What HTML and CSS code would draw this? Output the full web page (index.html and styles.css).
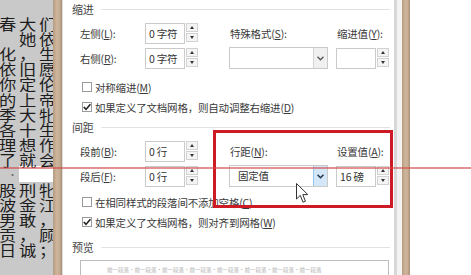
FILE: index.html
```html
<!DOCTYPE html>
<html lang="zh-CN">
<head>
<meta charset="utf-8">
<title>段落</title>
<link rel="stylesheet" href="styles.css">
</head>
<body>
<div class="doc">
  <div class="ln"><span>春</span><span>大</span><span>们</span></div>
  <div class="ln"><span></span><span>她</span><span>依</span></div>
  <div class="ln"><span>化</span><span>，</span><span>生</span></div>
  <div class="ln"><span>依</span><span>旧</span><span>愿</span></div>
  <div class="ln"><span>你</span><span>定</span><span>伦</span></div>
  <div class="ln"><span>的</span><span>上</span><span>帝</span></div>
  <div class="ln"><span>季</span><span>大</span><span>牝</span></div>
  <div class="ln"><span>各</span><span>十</span><span>生</span></div>
  <div class="ln"><span>理</span><span>想</span><span>作</span></div>
  <div class="ln"><span>了</span><span>就</span><span>会</span></div>
  <div class="ln gapline"><span class="dot">·</span><span class="blank"></span></div>
  <div class="ln"><span>股</span><span>刑</span><span>牝</span></div>
  <div class="ln"><span>波</span><span>金</span><span>江</span></div>
  <div class="ln"><span>男</span><span>敢</span><span>，</span></div>
  <div class="ln"><span>贡</span><span>，</span><span>顾</span></div>
  <div class="ln"><span>日</span><span>诚</span><span>；</span></div>
</div>
<div class="bar"></div>
<div class="dialog">
  <div class="sec-head"><span>缩进</span></div>
  <div class="fields f1">
    <div class="lbl c1 r1">左侧(<u>L</u>):</div>
    <div class="spin c2 r1"><div class="inp">0 字符</div><div class="arrows"><span class="up"></span><span class="dn"></span></div></div>
    <div class="lbl c4 r1">特殊格式(<u>S</u>):</div>
    <div class="lbl c6 r1">缩进值(<u>Y</u>):</div>
    <div class="lbl c1 r2">右侧(<u>R</u>):</div>
    <div class="spin c2 r2"><div class="inp">0 字符</div><div class="arrows"><span class="up"></span><span class="dn"></span></div></div>
    <div class="sel c4 r2"><div class="val"></div><div class="btn"><svg width="7" height="5" viewBox="0 0 7 5"><path d="M0.5 0.8 L3.5 3.8 L6.5 0.8" fill="none" stroke="#555" stroke-width="1.3"/></svg></div></div>
    <div class="spin c6 r2"><div class="inp"></div><div class="arrows"><span class="up"></span><span class="dn"></span></div></div>
  </div>
  <div class="check first"><span class="box"></span><span>对称缩进(<u>M</u>)</span></div>
  <div class="check"><span class="box on"><svg width="10" height="10" viewBox="0 0 10 10"><path d="M1.8 5 L4 7.4 L8.4 2.2" fill="none" stroke="#222" stroke-width="1.6"/></svg></span><span>如果定义了文档网格，则自动调整右缩进(<u>D</u>)</span></div>
  <div class="sec-head"><span>间距</span></div>
  <div class="fields f2">
    <div class="lbl c1 r1">段前(<u>B</u>):</div>
    <div class="spin c2 r1"><div class="inp">0 行</div><div class="arrows"><span class="up"></span><span class="dn"></span></div></div>
    <div class="lbl c4 r1">行距(<u>N</u>):</div>
    <div class="lbl c6 r1">设置值(<u>A</u>):</div>
    <div class="lbl c1 r2">段后(<u>F</u>):</div>
    <div class="spin c2 r2"><div class="inp">0 行</div><div class="arrows"><span class="up"></span><span class="dn"></span></div></div>
    <div class="sel c4 r2 hot"><div class="val">固定值</div><div class="btn"><svg width="7" height="5" viewBox="0 0 7 5"><path d="M0.5 0.8 L3.5 3.8 L6.5 0.8" fill="none" stroke="#1f3550" stroke-width="1.5"/></svg></div></div>
    <div class="spin c6 r2"><div class="inp">16 磅</div><div class="arrows"><span class="up"></span><span class="dn"></span></div></div>
  </div>
  <div class="check second"><span class="box"></span><span>在相同样式的段落间不添加空格(<u>C</u>)</span></div>
  <div class="check"><span class="box on"><svg width="10" height="10" viewBox="0 0 10 10"><path d="M1.8 5 L4 7.4 L8.4 2.2" fill="none" stroke="#222" stroke-width="1.6"/></svg></span><span>如果定义了文档网格，则对齐到网格(<u>W</u>)</span></div>
  <div class="sec-head prev"><span>预览</span></div>
  <div class="preview"><div class="ptext">前一段落·前一段落·前一段落·前一段落·前一段落·前一段落·前一段落·前一段落</div></div>
</div>
<div class="gap"></div>
<div class="bar bar2"></div>
<div class="rest"></div>

<div class="redbox"></div>
<div class="redline"></div>
<svg class="cursor" width="13" height="21" viewBox="0 0 13 21"><path d="M0.5 0.5 L0.5 16 L4.3 12.4 L7 19.2 L9.4 18.2 L6.8 11.6 L11.8 11.6 Z" fill="#fff" stroke="#333" stroke-width="1"/></svg>
</body>
</html>
```

FILE: styles.css
```css
html, body {
  margin: 0;
  padding: 0;
}
body {
  width: 471px;
  height: 275px;
  overflow: hidden;
  display: flex;
  position: relative;
  background: #fff;
  font-family: "Noto Sans CJK SC", "Noto Sans", sans-serif;
}
.doc {
  width: 53px;
  flex: none;
  background: #c9c9c9;
  overflow: hidden;
  padding-top: 16px;
  box-sizing: border-box;
  font-family: "Noto Sans CJK SC", sans-serif;
  font-weight: 400;
  font-size: 15px;
  color: #1e1e1e;
  display: flex;
  flex-direction: column;
}
.ln {
  height: 15.1px;
  flex: none;
  display: flex;
  align-items: center;
  margin-left: -1px;
}
.ln span {
  width: 20px;
  flex: none;
  display: block;
  line-height: 15px;
  transform: scaleX(1.15);
  transform-origin: left center;
}
.gapline .dot {
  width: auto;
  font-size: 9px;
  margin-left: 9px;
  color: #666;
  transform: none;
}
.gapline .blank {
  width: 40px;
  height: 16px;
  background: #fff;
  margin-left: 2px;
  transform: none;
}
.bar {
  width: 9px;
  flex: none;
  background: linear-gradient(90deg, #b49b82 0%, #cdb59c 40%, #c7ae95 70%, #a89079 100%);
}
.bar2 {
  width: 8px;
}
.gap {
  width: 5px;
  flex: none;
  background: #f3f3f3;
}
.rest {
  flex: 1;
  background: #fff;
}
.dialog {
  width: 335px;
  flex: none;
  box-sizing: border-box;
  border-left: 1px solid #dcdcdc;
  border-right: 3px solid #d8d8d8;
  padding-left: 9px;
  padding-right: 4px;
  background: #fff;
  font-size: 10.5px;
  letter-spacing: -0.2px;
  color: #3a3a3a;
  display: flex;
  flex-direction: column;
}
.sec-head {
  height: 18px;
  display: flex;
  align-items: center;
  color: #454545;
  font-size: 11px;
}
.sec-head::after {
  content: "";
  flex: 1;
  height: 1px;
  background: #e2e2e2;
  margin-left: 7px;
}
.check + .sec-head {
  height: 20px;
}
.sec-head.prev {
  margin-top: 5px;
}
.fields {
  display: grid;
  grid-template-columns: 65px 53px 31px 99px 8px 53px;
  grid-template-rows: 21px 21px;
  row-gap: 4px;
  margin-left: 8px;
}
.f1 { margin-top: 5px; }
.f2 { margin-top: 4px; }
.c1 { grid-column: 1; }
.c2 { grid-column: 2; }
.c4 { grid-column: 4; }
.c6 { grid-column: 6; }
.r1 { grid-row: 1; }
.r2 { grid-row: 2; }
.lbl {
  display: flex;
  align-items: center;
  white-space: nowrap;
}
.c4.lbl, .c6.lbl {
  padding-left: 1px;
}
u {
  text-decoration: underline;
  text-underline-offset: 1px;
}
.spin {
  display: flex;
  gap: 1px;
}
.inp {
  width: 40px;
  height: 21px;
  box-sizing: border-box;
  border: 1px solid #cacaca;
  padding-left: 3px;
  line-height: 19px;
  white-space: nowrap;
  overflow: hidden;
  color: #333;
}
.arrows {
  width: 12px;
  height: 19px;
  display: flex;
  flex-direction: column;
  gap: 1px;
}
.arrows span {
  flex: 1;
  border: 1px solid #d2d2d2;
  background: #f4f4f4;
  position: relative;
}
.arrows span::after {
  content: "";
  position: absolute;
  left: 3px;
  top: 2px;
  border-left: 2px solid transparent;
  border-right: 2px solid transparent;
}
.arrows .up::after {
  border-bottom: 3px solid #333;
}
.arrows .dn::after {
  border-top: 3px solid #333;
}
.sel {
  display: flex;
  height: 22px;
  box-sizing: border-box;
  border: 1px solid #cacaca;
  margin-top: -1px;
}
.sel .val {
  flex: 1;
  padding-left: 8px;
  line-height: 20px;
  color: #333;
}
.sel .btn {
  width: 13px;
  border-left: 1px solid #d6d6d6;
  background: #f0f0f0;
  display: flex;
  align-items: center;
  justify-content: center;
}
.sel.hot .btn {
  background: #d3e7f8;
  border-left: 1px solid #9cc5ea;
}
.check {
  height: 20px;
  display: flex;
  align-items: center;
  padding-left: 10px;
  white-space: nowrap;
}
.check.first { margin-top: 8px; }
.check.second { margin-top: 5px; }
.box {
  width: 10px;
  height: 10px;
  box-sizing: border-box;
  border: 1px solid #9a9a9a;
  margin-right: 3px;
  background: #fff;
  position: relative;
}
.box svg {
  position: absolute;
  left: -1px;
  top: -1px;
}
.preview {
  margin-left: 8px;
  margin-right: 1px;
  margin-top: 3px;
  flex: 1;
  border: 1px solid #bdbdbd;
  border-bottom: none;
  overflow: hidden;
}
.ptext {
  font-size: 5.5px;
  color: #b0b0b0;
  letter-spacing: 0;
  padding-top: 5px;
  padding-left: 26px;
  white-space: nowrap;
}
.redbox {
  position: absolute;
  left: 213px;
  top: 130px;
  width: 180px;
  height: 78px;
  box-sizing: border-box;
  border: 3px solid #cc1b24;
}
.redline {
  position: absolute;
  left: 0;
  top: 167px;
  width: 471px;
  height: 2px;
  background: rgba(214, 72, 72, 0.6);
}
.cursor {
  position: absolute;
  left: 296px;
  top: 183px;
}
```
